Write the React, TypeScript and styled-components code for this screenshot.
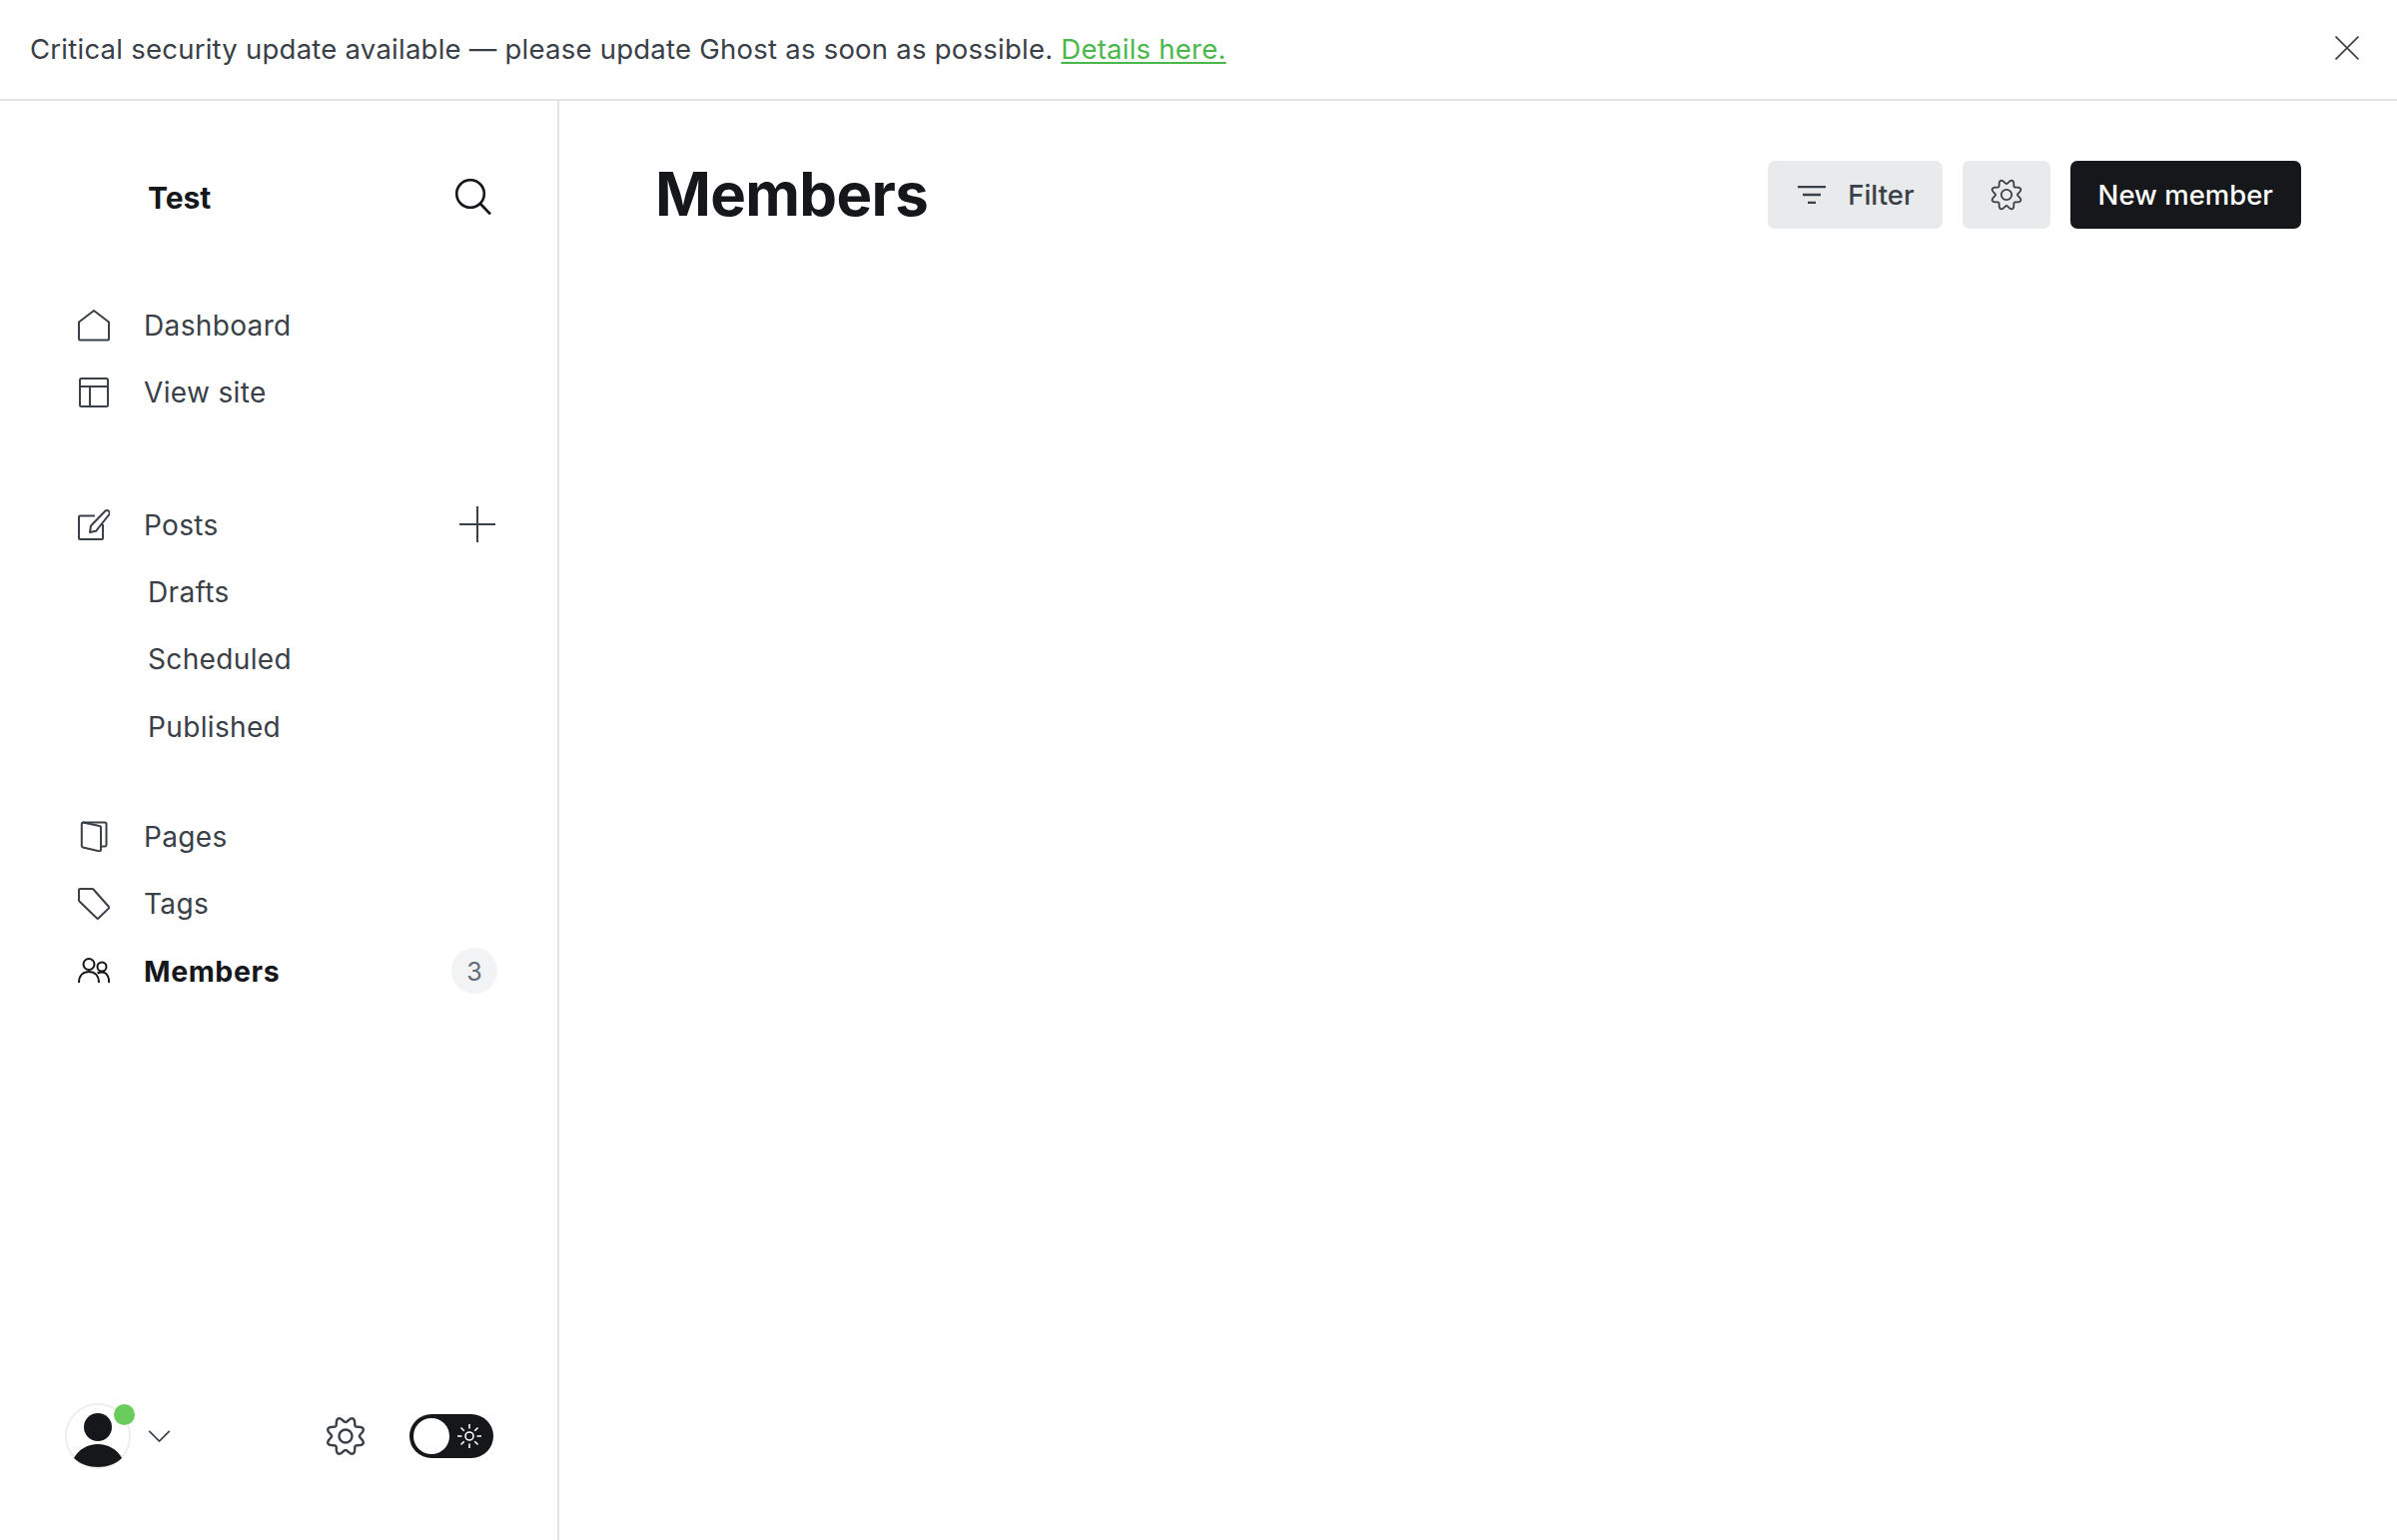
import React from "react";
import styled, { createGlobalStyle } from "styled-components";

const GlobalStyle = createGlobalStyle`
  html, body {
    margin: 0;
    padding: 0;
    background: #fff;
    font-family: Inter, "Noto Sans", sans-serif;
    color: #394047;
  }
  * {
    box-sizing: border-box;
  }
`;

const gearPath = (cx: number, cy: number, r: number, depth: number) => {
  const pts: string[] = [];
  for (let i = 0; i < 160; i++) {
    const a = (i / 160) * Math.PI * 2;
    const rad = r - depth * Math.cos(8 * a);
    pts.push(`${(cx + rad * Math.sin(a)).toFixed(2)} ${(cy - rad * Math.cos(a)).toFixed(2)}`);
  }
  return `M${pts.join("L")}Z`;
};

const App: React.FC = () => {
  return (
    <>
      <GlobalStyle />
      <Page>
        <Banner>
          <BannerText>
            Critical security update available — please update Ghost as soon as possible.{" "}
            <BannerLink href="#">Details here.</BannerLink>
          </BannerText>
          <CloseIcon viewBox="0 0 24 24">
            <path d="M.5.5l23 23M23.5.5l-23 23" />
          </CloseIcon>
        </Banner>
        <Body>
          <Sidebar>
            <SideHead>
              <SiteName>Test</SiteName>
              <SearchIcon viewBox="0 0 36 36">
                <circle cx="15" cy="15" r="13.800" />
                <path d="M25 25l10 10.500" />
              </SearchIcon>
            </SideHead>

            <NavGroup>
              <NavRow>
                <NavIcon viewBox="0 0 32 32">
                  <path d="M1 12.5L16 1l15 11.5V29.5a1 1 0 0 1-1 1H2a1 1 0 0 1-1-1z" />
                </NavIcon>
                <NavLabel>Dashboard</NavLabel>
              </NavRow>
              <NavRow>
                <NavIcon viewBox="0 0 32 32">
                  <rect x="2" y="2" width="28" height="28" rx="1.5" />
                  <path d="M2 10h28M12 10v20" />
                </NavIcon>
                <NavLabel>View site</NavLabel>
              </NavRow>
            </NavGroup>

            <NavGroup $gap={65}>
              <NavRow>
                <NavIcon viewBox="0 0 32 32">
                  <path d="M17 7.5H2a1 1 0 0 0-1 1V30a1 1 0 0 0 1 1h22a1 1 0 0 0 1-1V16" />
                  <path d="M12 24l1-6.500L27.500 2.500a2.500 2.500 0 0 1 3.500.5 2.500 2.500 0 0 1 0 3.500L18 22.800z" />
                </NavIcon>
                <NavLabel>Posts</NavLabel>
                <PlusIcon viewBox="0 0 36 36">
                  <path d="M18 0v36M0 18h36" />
                </PlusIcon>
              </NavRow>
              <SubRow>Drafts</SubRow>
              <SubRow>Scheduled</SubRow>
              <SubRow>Published</SubRow>
            </NavGroup>

            <NavGroup $gap={43}>
              <NavRow>
                <NavIcon viewBox="0 0 32 32">
                  <path d="M5 2.500h22a1.500 1.500 0 0 1 1.500 1.500v21a1.500 1.500 0 0 1-1.500 1.500h-4" />
                  <path d="M5 2.500l16.500 3.500a1.500 1.500 0 0 1 1.500 1.500V30a1.500 1.500 0 0 1-2 1.200L5 27.500a1.500 1.500 0 0 1-1.200-1.500V4a1.500 1.500 0 0 1 1.200-1.500z" />
                </NavIcon>
                <NavLabel>Pages</NavLabel>
              </NavRow>
              <NavRow>
                <NavIcon viewBox="0 0 32 32">
                  <path d="M2 1h12.500a1.500 1.500 0 0 1 1 .5L31 19a1 1 0 0 1 0 1.400L20.500 30.500a1 1 0 0 1-1.400 0L1.500 13.500a1.500 1.500 0 0 1-.5-1V2a1 1 0 0 1 1-1z" />
                </NavIcon>
                <NavLabel>Tags</NavLabel>
              </NavRow>
              <NavRow>
                <NavIcon viewBox="0 0 32 32" $dark>
                  <circle cx="11" cy="9.500" r="5.500" />
                  <path d="M1 28c0-7 4-11 10-11s10 4 10 11" />
                  <circle cx="24" cy="12" r="4.500" />
                  <path d="M19.500 18.500c1.300-.6 2.800-1 4.500-1 4.500 0 7.200 4 7.200 10.500" />
                </NavIcon>
                <NavLabel $active>Members</NavLabel>
                <CountBadge>3</CountBadge>
              </NavRow>
            </NavGroup>

            <SideFoot>
              <Avatar>
                <AvatarArt viewBox="0 0 62 62">
                  <circle cx="31" cy="22" r="14" />
                  <path d="M7 53c5-9 14-14 24-14s19 5 24 14c-6 6-15 9-24 9s-18-3-24-9z" />
                </AvatarArt>
                <OnlineDot />
              </Avatar>
              <ChevronIcon viewBox="0 0 24 14">
                <path d="M1 1l11 11L23 1" />
              </ChevronIcon>
              <FootGear viewBox="0 0 40 40">
                <path d={gearPath(20, 20, 16.5, 2.6)} />
                <circle cx="20" cy="20" r="6.500" />
              </FootGear>
              <ThemeToggle>
                <ToggleKnob />
                <SunIcon viewBox="0 0 24 24">
                  <circle cx="12" cy="12" r="4" />
                  <path d="M12 0v4.500M12 19.500V24M0 12h4.500M19.500 12H24M3.500 3.500l3.200 3.200M17.300 17.300l3.200 3.200M20.500 3.500l-3.200 3.200M6.700 17.300l-3.200 3.200" />
                </SunIcon>
              </ThemeToggle>
            </SideFoot>
          </Sidebar>

          <Main>
            <MainHead>
              <Title>Members</Title>
              <Actions>
                <GreyButton>
                  <FilterIcon viewBox="0 0 28 18">
                    <path d="M0 1h28M5 9h18M10 17h8" />
                  </FilterIcon>
                  Filter
                </GreyButton>
                <GreySquare>
                  <ButtonGear viewBox="0 0 32 32">
                    <path d={gearPath(16, 16, 13.2, 2.2)} />
                    <circle cx="16" cy="16" r="5.200" />
                  </ButtonGear>
                </GreySquare>
                <DarkButton>New member</DarkButton>
              </Actions>
            </MainHead>
          </Main>
        </Body>
      </Page>
    </>
  );
};

export default App;

const Page = styled.div`
  display: flex;
  flex-direction: column;
  width: 100%;
  height: 100vh;
  overflow: hidden;
`;

const Banner = styled.div`
  display: flex;
  align-items: center;
  justify-content: space-between;
  height: 101px;
  padding: 0 38px 2px 30px;
  border-bottom: 2px solid #e3e3e3;
  flex-shrink: 0;
`;

const BannerText = styled.div`
  font-size: 27.5px;
  line-height: 40px;
  letter-spacing: 0.24px;
  color: #394047;
`;

const BannerLink = styled.a`
  color: #4bb74a;
  text-decoration: underline;
  text-underline-offset: 3px;
  text-decoration-thickness: 2px;
`;

const CloseIcon = styled.svg`
  width: 24px;
  height: 24px;
  margin-bottom: 2px;
  fill: none;
  stroke: #394047;
  stroke-width: 1.6;
`;

const Body = styled.div`
  display: flex;
  flex: 1;
  min-height: 0;
`;

const Sidebar = styled.aside`
  display: flex;
  flex-direction: column;
  width: 560px;
  flex-shrink: 0;
  border-right: 2px solid #e3e3e3;
  padding: 66px 60px 71px 78px;
`;

const SideHead = styled.div`
  display: flex;
  align-items: center;
  justify-content: space-between;
  height: 62px;
  margin-bottom: 63px;
  padding: 0 6px 0 70px;
`;

const SiteName = styled.div`
  font-size: 30px;
  font-weight: 700;
  color: #15171a;
`;

const SearchIcon = styled.svg`
  width: 36px;
  height: 36px;
  margin-top: -2px;
  fill: none;
  stroke: #15171a;
  stroke-width: 2.6;
`;

const NavGroup = styled.div<{ $gap?: number }>`
  display: flex;
  flex-direction: column;
  margin-top: ${(p) => p.$gap ?? 0}px;
`;

const NavRow = styled.div`
  display: flex;
  align-items: center;
  height: 67.3px;
`;

const NavIcon = styled.svg<{ $dark?: boolean }>`
  width: 32px;
  height: 32px;
  margin-right: 34px;
  flex-shrink: 0;
  fill: none;
  stroke: ${(p) => (p.$dark ? "#15171a" : "#394047")};
  stroke-width: 2;
  stroke-linejoin: round;
`;

const NavLabel = styled.span<{ $active?: boolean }>`
  flex: 1;
  padding-top: 1px;
  font-size: ${(p) => (p.$active ? 28.5 : 28)}px;
  font-weight: ${(p) => (p.$active ? 700 : 400)};
  letter-spacing: ${(p) => (p.$active ? 0.6 : 0.35)}px;
  color: ${(p) => (p.$active ? "#15171a" : "#394047")};
`;

const SubRow = styled.div`
  display: flex;
  align-items: center;
  height: 67.3px;
  padding: 1px 0 0 70px;
  font-size: 28px;
  letter-spacing: 0.35px;
  color: #394047;
`;

const PlusIcon = styled.svg`
  width: 36px;
  height: 36px;
  margin-right: 2px;
  fill: none;
  stroke: #394047;
  stroke-width: 2;
`;

const CountBadge = styled.span`
  display: flex;
  align-items: center;
  justify-content: center;
  width: 46px;
  height: 46px;
  padding-top: 1px;
  border-radius: 50%;
  background: #f1f3f4;
  font-size: 25px;
  color: #626d79;
`;

const SideFoot = styled.div`
  display: flex;
  align-items: center;
  margin: auto 4px 0 -13px;
`;

const Avatar = styled.div`
  position: relative;
  width: 66px;
  height: 66px;
  border-radius: 50%;
  border: 2px solid #eeeeee;
`;

const AvatarArt = styled.svg`
  display: block;
  width: 62px;
  height: 62px;
  fill: #15171a;
`;

const OnlineDot = styled.span`
  position: absolute;
  top: -1px;
  right: -6px;
  width: 21px;
  height: 21px;
  border-radius: 50%;
  background: #6acc5c;
`;

const ChevronIcon = styled.svg`
  width: 23px;
  height: 13px;
  margin-left: 17px;
  fill: none;
  stroke: #394047;
  stroke-width: 1.8;
`;

const FootGear = styled.svg`
  width: 40px;
  height: 40px;
  margin-left: auto;
  margin-right: 44px;
  fill: none;
  stroke: #394047;
  stroke-width: 2.4;
`;

const ThemeToggle = styled.div`
  display: flex;
  align-items: center;
  justify-content: space-between;
  width: 84px;
  height: 44px;
  padding: 0 12px 0 4px;
  border-radius: 22px;
  background: #15171a;
`;

const ToggleKnob = styled.span`
  width: 36px;
  height: 36px;
  border-radius: 50%;
  background: #fff;
`;

const SunIcon = styled.svg`
  width: 24px;
  height: 24px;
  fill: none;
  stroke: #fff;
  stroke-width: 1.6;
`;

const Main = styled.main`
  flex: 1;
  padding: 60px 96px 0 96px;
`;

const MainHead = styled.div`
  display: flex;
  align-items: center;
  justify-content: space-between;
  height: 68px;
`;

const Title = styled.h1`
  margin: -2px 0 0;
  font-size: 60px;
  font-weight: 700;
  letter-spacing: -0.7px;
  color: #15171a;
`;

const Actions = styled.div`
  display: flex;
  gap: 20px;
`;

const GreyButton = styled.button`
  display: flex;
  align-items: center;
  gap: 22px;
  height: 68px;
  padding: 0 28px 0 30px;
  border: 0;
  border-radius: 7px;
  background: #e9eaeb;
  font-family: inherit;
  font-size: 27.5px;
  font-weight: 500;
  color: #394047;
`;

const FilterIcon = styled.svg`
  width: 28px;
  height: 18px;
  fill: none;
  stroke: #394047;
  stroke-width: 2.4;
`;

const GreySquare = styled(GreyButton)`
  justify-content: center;
  width: 88px;
  padding: 0;
`;

const ButtonGear = styled.svg`
  width: 32px;
  height: 32px;
  fill: none;
  stroke: #394047;
  stroke-width: 1.8;
`;

const DarkButton = styled(GreyButton)`
  padding: 0 28px;
  background: #15171a;
  color: #fff;
`;
